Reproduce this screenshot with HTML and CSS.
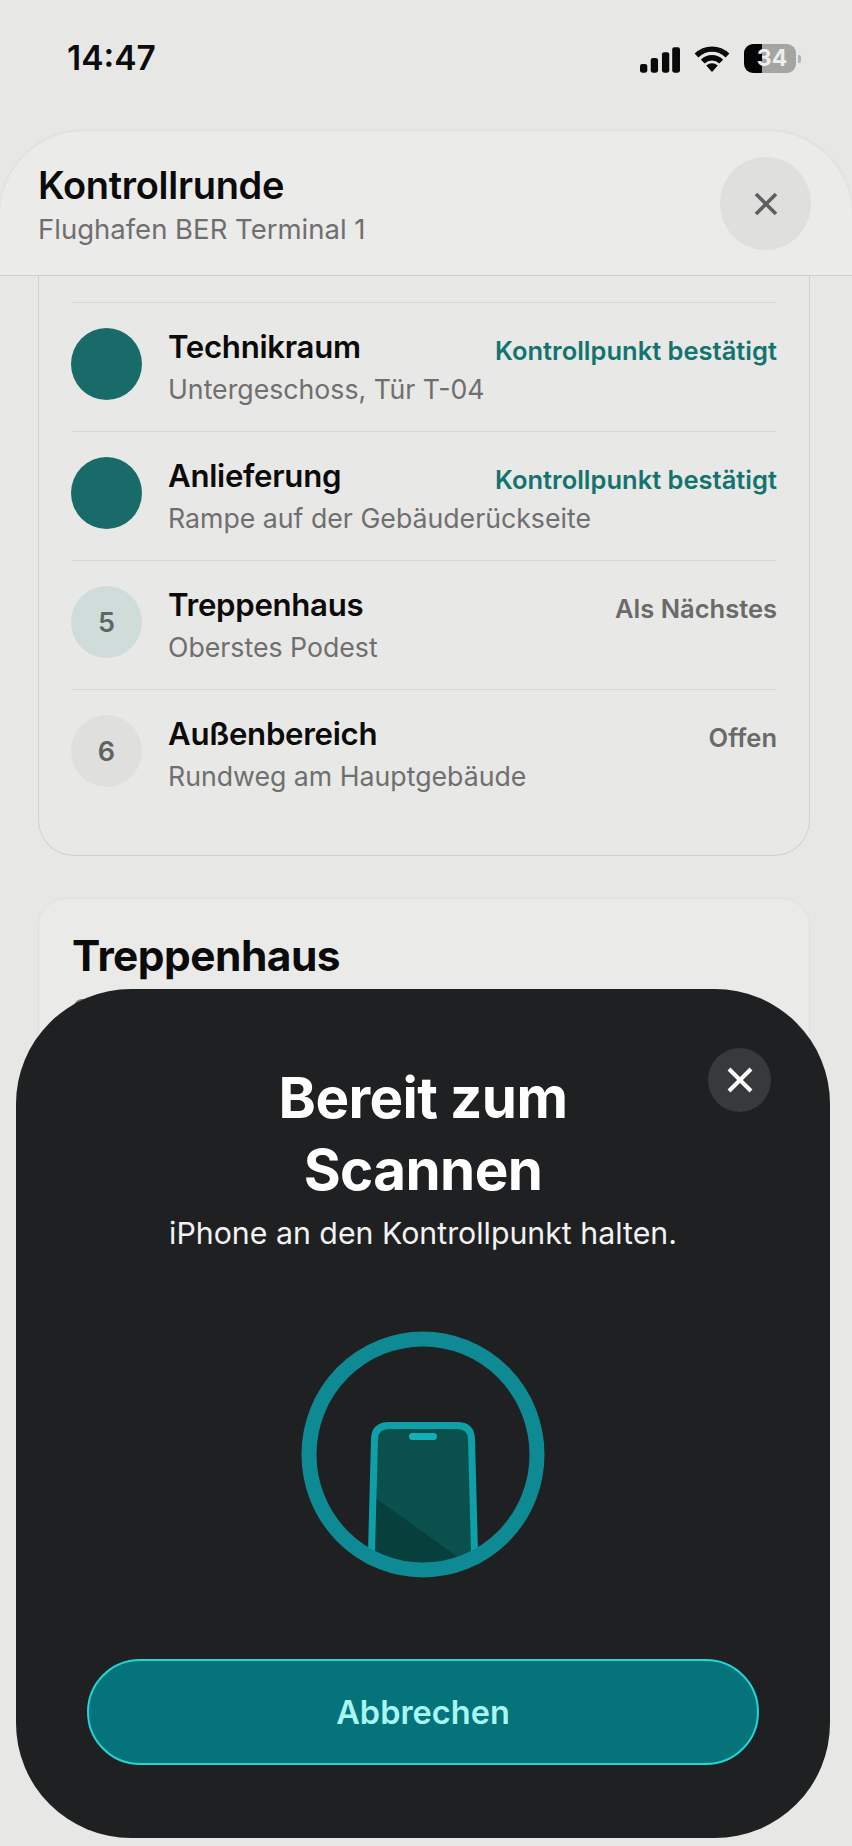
FILE: index.html
```html
<!DOCTYPE html>
<html lang="de">
<head>
  <meta charset="UTF-8" />
  <meta name="viewport" content="width=device-width, initial-scale=1.0" />
  <title>Kontrollrunde</title>
  <link rel="stylesheet" href="styles.css">
</head>
<body>
  <div class="screen">
    <div class="status-bar">
      <span class="time">14:47</span>
      <div class="status-icons">
        <svg class="signal" width="40" height="26" viewBox="0 0 41 26">
          <rect x="0" y="17" width="7.5" height="9" rx="2.2" />
          <rect x="11" y="11" width="7.5" height="15" rx="2.2" />
          <rect x="22.5" y="5" width="7.5" height="21" rx="2.2" />
          <rect x="33" y="0" width="8" height="26" rx="2.2" />
        </svg>
        <svg class="wifi" width="36" height="27" viewBox="0 0 36 27">
          <path d="M2.5 10.5 A22 22 0 0 1 33.5 10.5" />
          <path d="M8.8 16.6 A13 13 0 0 1 27.2 16.6" />
          <polygon class="wifi-dot" points="18,27 12.2,20.6 15,18.8 18,18.2 21,18.8 23.8,20.6" />
        </svg>
        <div class="battery"><span>34</span></div>
        <div class="battery-nub"></div>
      </div>
    </div>

    <div class="header">
      <div>
        <h1>Kontrollrunde</h1>
        <p class="header-sub">Flughafen BER Terminal 1</p>
      </div>
      <button class="header-close" aria-label="Schließen">
        <svg width="24" height="24" viewBox="0 0 24 24"><path d="M2 2 L22 22 M22 2 L2 22" /></svg>
      </button>
    </div>

    <div class="scroll">
      <div class="card list-card">
        <div class="row">
          <div class="dot done"></div>
          <div class="row-body">
            <div class="row-top">
              <span class="row-title">Technikraum</span>
              <span class="row-state confirmed">Kontrollpunkt bestätigt</span>
            </div>
            <div class="row-sub">Untergeschoss, Tür T-04</div>
          </div>
        </div>
        <div class="row">
          <div class="dot done"></div>
          <div class="row-body">
            <div class="row-top">
              <span class="row-title">Anlieferung</span>
              <span class="row-state confirmed">Kontrollpunkt bestätigt</span>
            </div>
            <div class="row-sub">Rampe auf der Gebäuderückseite</div>
          </div>
        </div>
        <div class="row">
          <div class="dot next">5</div>
          <div class="row-body">
            <div class="row-top">
              <span class="row-title">Treppenhaus</span>
              <span class="row-state">Als Nächstes</span>
            </div>
            <div class="row-sub">Oberstes Podest</div>
          </div>
        </div>
        <div class="row">
          <div class="dot open">6</div>
          <div class="row-body">
            <div class="row-top">
              <span class="row-title">Außenbereich</span>
              <span class="row-state">Offen</span>
            </div>
            <div class="row-sub">Rundweg am Hauptgebäude</div>
          </div>
        </div>
      </div>

      <div class="card detail-card">
        <h2>Treppenhaus</h2>
        <p class="detail-sub">Oberstes Podest</p>
      </div>
    </div>

    <div class="sheet">
      <button class="sheet-close" aria-label="Schließen">
        <svg width="26" height="26" viewBox="0 0 26 26"><path d="M2 2 L24 24 M24 2 L2 24" /></svg>
      </button>
      <h2 class="sheet-title">Bereit zum<br>Scannen</h2>
      <p class="sheet-sub">iPhone an den Kontrollpunkt halten.</p>

      <svg class="scan-icon" width="244" height="247" viewBox="0 0 244 247">
        <defs>
          <clipPath id="ringClip"><ellipse cx="122" cy="123.5" rx="110" ry="112" /></clipPath>
        </defs>
        <g clip-path="url(#ringClip)">
          <path class="phone-fill" d="M70 240 L73.5 108 Q74 94.5 88 94.5 L156 94.5 Q170 94.5 170.5 108 L174 240 Z" />
          <path class="phone-shade" d="M73 166 L165 232 L150 250 L70 250 Z" />
          <path class="phone-edge" d="M70 240 L73.5 108 Q74 94.5 88 94.5 L156 94.5 Q170 94.5 170.5 108 L174 240" />
          <rect class="phone-notch" x="108" y="102" width="28" height="7" rx="3.5" />
        </g>
        <ellipse class="ring" cx="122" cy="123.5" rx="114" ry="115.5" />
      </svg>

      <button class="cancel">Abbrechen</button>
    </div>
  </div>
</body>
</html>
```

FILE: styles.css
```css
* {
  box-sizing: border-box;
}

body {
  margin: 0;
  font-family: Inter, "Liberation Sans", sans-serif;
  background: #e7e7e5;
}

h1, h2, p {
  margin: 0;
}

button {
  border: none;
  padding: 0;
  font-family: inherit;
  cursor: pointer;
}

.screen {
  position: relative;
  width: 852px;
  height: 1846px;
  overflow: hidden;
  display: flex;
  flex-direction: column;
  background: #e7e7e5;
}

/* status bar */
.status-bar {
  height: 131px;
  flex-shrink: 0;
  display: flex;
  justify-content: space-between;
  align-items: flex-start;
  padding: 38px 51px 0 67px;
}

.time {
  font-size: 33.5px;
  line-height: 40px;
  font-weight: 600;
  color: #0c0c0c;
}

.status-icons {
  display: flex;
  align-items: center;
  margin-top: 6px;
}

.signal {
  fill: #0a0a0a;
  margin-right: 14px;
  margin-top: 2px;
}

.wifi {
  margin-right: 14px;
}

.wifi path {
  fill: none;
  stroke: #0a0a0a;
  stroke-width: 5.4;
}

.wifi-dot {
  fill: #0a0a0a;
}

.battery {
  width: 52px;
  height: 29px;
  border-radius: 9px;
  background: linear-gradient(90deg, #050505 0, #050505 18px, #a4a4a2 18px);
  color: #eeeeec;
  font-size: 23px;
  line-height: 29px;
  font-weight: 700;
  text-align: center;
}

.battery span {
  margin-left: 4px;
}

.battery-nub {
  width: 3px;
  height: 8px;
  margin-left: 2px;
  border-radius: 0 2px 2px 0;
  background: #b4b4b2;
}

/* header */
.header {
  height: 145px;
  flex-shrink: 0;
  display: flex;
  justify-content: space-between;
  align-items: flex-start;
  padding: 26px 41px 0 38px;
  background: #ebebe9;
  border-bottom: 1.5px solid #cfcfcd;
  border-radius: 84px 84px 0 0;
  box-shadow: 0 -1px 3px rgba(0, 0, 0, 0.05);
  position: relative;
  z-index: 1;
}

h1 {
  margin-top: 5px;
  font-size: 38px;
  line-height: 46px;
  font-weight: 600;
  letter-spacing: -0.3px;
  color: #0b0b0b;
}

.header-sub {
  margin-top: 4px;
  font-size: 27.5px;
  line-height: 34px;
  color: #6f6f6f;
}

.header-close {
  width: 91px;
  height: 93px;
  border-radius: 50%;
  background: #dfdfdd;
  display: flex;
  align-items: center;
  justify-content: center;
}

.header-close svg {
  fill: none;
  stroke: #5f5f5f;
  stroke-width: 3.6;
}

/* list */
.scroll {
  flex: 1;
  overflow: hidden;
  padding: 0 42px 0 38px;
}

.card {
  border: 1.5px solid #d0d0ce;
}

.list-card {
  padding: 26px 32px 37px;
  background: #e8e8e6;
  border-top: none;
  border-radius: 0 0 36px 36px;
}

.row {
  height: 129px;
  display: flex;
  align-items: flex-start;
  gap: 26px;
  padding-top: 25px;
  border-top: 1.5px solid #d6d6d4;
}

.dot {
  width: 71px;
  height: 72px;
  flex-shrink: 0;
  border-radius: 50%;
  display: flex;
  align-items: center;
  justify-content: center;
  font-size: 27px;
  font-weight: 600;
}

.dot.done {
  background: #186b68;
}

.dot.next {
  background: #cfdcda;
  color: #5c6867;
}

.dot.open {
  background: #dfdfdd;
  color: #626262;
}

.row-body {
  flex: 1;
  min-width: 0;
}

.row-top {
  display: flex;
  justify-content: space-between;
  align-items: center;
  height: 38px;
}

.row-title {
  font-size: 31.2px;
  font-weight: 600;
  letter-spacing: -0.3px;
  color: #0b0b0b;
}

.row-state {
  margin-top: 7px;
  font-size: 25.5px;
  font-weight: 600;
  color: #6a6a6a;
}

.row-state.confirmed {
  color: #13746f;
}

.row-sub {
  margin-top: 6px;
  font-size: 26.7px;
  line-height: 34px;
  color: #6f6f6f;
}

.detail-card {
  margin-top: 42px;
  height: 300px;
  padding: 32px 33px;
  background: #eaeae8;
  border-color: #dfdfdd;
  border-radius: 28px;
}

.detail-card h2 {
  font-size: 42.4px;
  line-height: 50px;
  font-weight: 700;
  letter-spacing: -0.5px;
  color: #0b0b0b;
}

.detail-sub {
  margin-top: 12px;
  font-size: 27px;
  line-height: 34px;
  color: #777;
}

/* scan sheet, sits over the page */
.sheet {
  position: absolute;
  left: 16px;
  top: 989px;
  width: 814px;
  height: 849px;
  padding-top: 73px;
  display: flex;
  flex-direction: column;
  align-items: center;
  background: #1f2021;
  border-radius: 115px;
  z-index: 2;
}

.sheet-close {
  position: absolute;
  top: 59px;
  left: 692px;
  width: 63px;
  height: 64px;
  border-radius: 50%;
  background: #38393b;
  display: flex;
  align-items: center;
  justify-content: center;
}

.sheet-close svg {
  fill: none;
  stroke: #fff;
  stroke-width: 4;
}

.sheet-title {
  font-size: 56.5px;
  line-height: 72px;
  font-weight: 700;
  letter-spacing: -0.6px;
  text-align: center;
  color: #fff;
}

.sheet-sub {
  margin-top: 8px;
  font-size: 30.3px;
  line-height: 38px;
  color: #f2f2f2;
}

.scan-icon {
  margin-top: 79px;
}

.ring {
  fill: none;
  stroke: #0e8a94;
  stroke-width: 15;
}

.phone-fill {
  fill: #0a504c;
}

.phone-shade {
  fill: #073f3d;
}

.phone-edge {
  fill: none;
  stroke: #0f9fa9;
  stroke-width: 7;
}

.phone-notch {
  fill: #12b0b8;
}

.cancel {
  margin-top: 81px;
  width: 672px;
  height: 106px;
  border-radius: 53px;
  background: #05737a;
  border: 2px solid #25d5d5;
  color: #a8f5f2;
  font-size: 32.5px;
  font-weight: 600;
}
```
